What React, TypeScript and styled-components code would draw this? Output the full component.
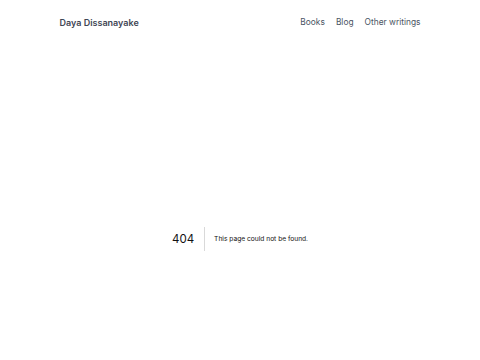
import React from "react";
import styled, { createGlobalStyle } from "styled-components";

const Global = createGlobalStyle`
  html, body { margin: 0; padding: 0; background: #fff; }
  body { font-family: Inter, "Noto Sans", sans-serif; overflow: hidden; }
`;

const Page = styled.div`
  height: 360px;
  display: flex;
  flex-direction: column;
`;

const Header = styled.header`
  height: 44px;
  flex: none;
  display: flex;
  justify-content: center;
`;

const HeaderInner = styled.div`
  width: 361px;
  display: flex;
  align-items: center;
  justify-content: space-between;
`;

const Brand = styled.a`
  font-size: 9px;
  font-weight: 600;
  color: #3f4654;
  text-decoration: none;
`;

const Nav = styled.nav`
  display: flex;
  gap: 11px;
  padding-left: 2px;
`;

const NavLink = styled.a`
  font-size: 8.4px;
  color: #4b5563;
  text-decoration: none;
`;

const Main = styled.main`
  flex: 1;
  padding-top: 74px;
  display: flex;
  align-items: center;
  justify-content: center;
`;

const Code = styled.h1`
  margin: 0 9px 0 0;
  padding: 0 10px 0 0;
  font-size: 11.5px;
  font-weight: 400;
  line-height: 24.5px;
  color: #111;
  border-right: 1px solid rgba(0, 0, 0, 0.15);
`;

const Message = styled.h2`
  margin: 0;
  font-size: 6.65px;
  font-weight: 400;
  line-height: 24.5px;
  color: #111;
`;

export default function App() {
  return (
    <>
      <Global />
      <Page>
        <Header>
          <HeaderInner>
            <Brand href="#">Daya Dissanayake</Brand>
            <Nav>
              <NavLink href="#">Books</NavLink>
              <NavLink href="#">Blog</NavLink>
              <NavLink href="#">Other writings</NavLink>
            </Nav>
          </HeaderInner>
        </Header>
        <Main>
          <Code>404</Code>
          <Message>This page could not be found.</Message>
        </Main>
      </Page>
    </>
  );
}
